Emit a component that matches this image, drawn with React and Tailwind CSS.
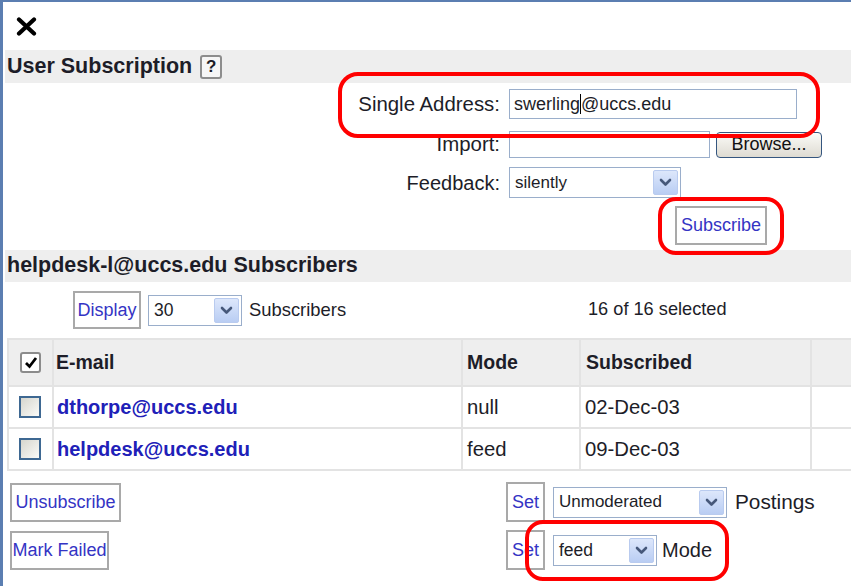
import React from "react";

function Chevron() {
  return (
    <svg width="13" height="9" viewBox="0 0 13 9">
      <path d="M2 2 L6.5 6.5 L11 2" fill="none" stroke="#46587a" strokeWidth="2.6" strokeLinecap="round" strokeLinejoin="round" />
    </svg>
  );
}

function Select({ className, text, textClass }) {
  return (
    <div className={"flex items-center justify-between border border-[#9aaecb] bg-white pl-[5px] pr-[2px] " + className}>
      <span className={textClass}>{text}</span>
      <div className="w-[25px] h-[calc(100%-4px)] rounded-[2px] border border-[#b9cbef] bg-gradient-to-b from-[#dde7fb] to-[#b9cdf3] flex items-center justify-center">
        <Chevron />
      </div>
    </div>
  );
}

function Btn({ className, children }) {
  return (
    <div className={"flex items-center justify-center border-2 border-[#a9a9a9] bg-white text-[#3434c4] text-[18px] " + className}>
      {children}
    </div>
  );
}

function Box({ checked }) {
  if (checked) {
    return (
      <div className="w-[21px] h-[21px] border-2 border-[#8c8c8c] rounded-[3px] bg-white flex items-center justify-center">
        <svg width="14" height="13" viewBox="0 0 14 13">
          <path d="M2 7 L5.5 10.5 L12 2" fill="none" stroke="#000" strokeWidth="2.8" />
        </svg>
      </div>
    );
  }
  return <div className="w-[22px] h-[22px] border-2 border-[#3e6892] bg-gradient-to-br from-[#d6d6ce] to-[#fbfbf8]" />;
}

const rows = [
  { email: "dthorpe@uccs.edu", mode: "null", date: "02-Dec-03" },
  { email: "helpdesk@uccs.edu", mode: "feed", date: "09-Dec-03" },
];

export default function App() {
  return (
    <div className="relative w-[851px] h-[586px] overflow-hidden bg-white border-t-2 border-l-[3px] border-[#5b7eb1] font-['Liberation_Sans',Arial,sans-serif] text-[#1d1d28]">
      {/* close */}
      <div className="h-[48px] flex items-center pl-[13px]">
        <svg width="21" height="19" viewBox="0 0 21 19">
          <path d="M3 2.5 L18 16.5 M18 2.5 L3 16.5" stroke="#000" strokeWidth="4.2" strokeLinecap="round" />
        </svg>
      </div>

      {/* header 1 */}
      <div className="ml-[2px] h-[33px] bg-[#eeeeee] flex items-center pl-[2px] gap-[8px]">
        <span className="text-[21.5px] font-bold leading-none">User Subscription</span>
        <span className="w-[22px] h-[24px] border-2 border-[#8d8d8d] rounded-[3px] bg-[#f6f6f6] flex items-center justify-center text-[17px] font-bold leading-none">?</span>
      </div>

      {/* form */}
      <div className="h-[167px] flex flex-col pt-[6px]">
        <div className="flex items-center h-[30px]">
          <div className="w-[497px] text-right text-[20.4px]">Single Address:</div>
          <div className="ml-[9px] w-[288px] h-[30px] border border-[#9aaecb] flex items-center pl-[4px] text-[18px]">
            <span>swerling</span>
            <span className="inline-block w-[1px] h-[20px] bg-black"></span>
            <span>@uccs.edu</span>
          </div>
        </div>
        <div className="flex items-center h-[27px] mt-[12px]">
          <div className="w-[497px] text-right text-[20.4px]">Import:</div>
          <div className="ml-[9px] w-[201px] h-[27px] border border-[#9aaecb]" />
          <div className="ml-[6px] w-[106px] h-[26px] rounded-[4px] border border-[#35567f] bg-gradient-to-b from-[#fbfbf8] to-[#dedbd2] flex items-center justify-center text-[18px] text-[#111]">
            Browse...
          </div>
        </div>
        <div className="flex items-center h-[31px] mt-[9px]">
          <div className="w-[497px] text-right text-[20px]">Feedback:</div>
          <Select className="ml-[9px] w-[172px] h-[31px]" text="silently" textClass="text-[17px]" />
        </div>
        <div className="flex mt-[8px]">
          <Btn className="ml-[672px] w-[92px] h-[39px]">Subscribe</Btn>
        </div>
      </div>

      {/* header 2 */}
      <div className="ml-[2px] h-[32px] bg-[#eeeeee] flex items-center pl-[2px]">
        <span className="text-[21.5px] font-bold leading-none">helpdesk-l@uccs.edu Subscribers</span>
      </div>

      {/* display row */}
      <div className="h-[56px] flex items-center">
        <div className="w-[585px] pl-[70px] flex items-center">
          <Btn className="w-[68px] h-[38px]">Display</Btn>
          <Select className="ml-[7px] w-[94px] h-[31px]" text="30" textClass="text-[17.5px]" />
          <span className="ml-[7px] text-[18.4px]">Subscribers</span>
        </div>
        <span className="text-[18.2px]">16 of 16 selected</span>
      </div>

      {/* table */}
      <div className="ml-[4px] w-[850px] border-t-2 border-l-2 border-[#e3e3e3]">
        <div className="flex h-[47px] bg-[#eeeeee] border-b-2 border-[#e3e3e3] font-bold text-[19.5px]">
          <div className="w-[45px] border-r-2 border-[#e3e3e3] flex items-center justify-center"><Box checked /></div>
          <div className="w-[409px] border-r-2 border-[#e3e3e3] flex items-center pl-[2px]">E-mail</div>
          <div className="w-[118px] border-r-2 border-[#e3e3e3] flex items-center pl-[4px]">Mode</div>
          <div className="w-[231px] border-r-2 border-[#e3e3e3] flex items-center pl-[5px]">Subscribed</div>
          <div className="flex-1"></div>
        </div>
        {rows.map((r) => (
          <div key={r.email} className="flex h-[42px] border-b-2 border-[#e3e3e3] text-[20.3px]">
            <div className="w-[45px] border-r-2 border-[#e3e3e3] flex items-center justify-center pr-[2px]"><Box /></div>
            <div className="w-[409px] border-r-2 border-[#e3e3e3] flex items-center pl-[3px] font-bold text-[20px] text-[#2020b8]">{r.email}</div>
            <div className="w-[118px] border-r-2 border-[#e3e3e3] flex items-center pl-[4px]">{r.mode}</div>
            <div className="w-[231px] border-r-2 border-[#e3e3e3] flex items-center pl-[4px]">{r.date}</div>
            <div className="flex-1"></div>
          </div>
        ))}
      </div>

      {/* actions */}
      <div className="flex flex-col pt-[11px] gap-[8px]">
        <div className="flex items-center h-[40px]">
          <div className="w-[503px] pl-[7px] flex">
            <Btn className="w-[111px] h-[39px]">Unsubscribe</Btn>
          </div>
          <Btn className="w-[39px] h-[40px]">Set</Btn>
          <Select className="ml-[8px] w-[174px] h-[31px]" text="Unmoderated" textClass="text-[17px]" />
          <span className="ml-[8px] text-[20.8px]">Postings</span>
        </div>
        <div className="flex items-center h-[40px]">
          <div className="w-[503px] pl-[7px] flex">
            <Btn className="w-[99px] h-[39px]">Mark Failed</Btn>
          </div>
          <Btn className="w-[39px] h-[40px]">Set</Btn>
          <Select className="ml-[8px] w-[104px] h-[31px]" text="feed" textClass="text-[17.5px]" />
          <span className="ml-[5px] text-[20px]">Mode</span>
        </div>
      </div>

      {/* annotations */}
      <div className="absolute left-[335px] top-[70px] w-[482px] h-[66px] border-[4px] border-[#ff0000] rounded-[20px]" />
      <div className="absolute left-[655px] top-[195px] w-[126px] h-[58px] border-[4px] border-[#ff0000] rounded-[18px]" />
      <div className="absolute left-[522px] top-[518px] w-[204px] h-[61px] border-[4px] border-[#ff0000] rounded-[18px]" />
    </div>
  );
}
